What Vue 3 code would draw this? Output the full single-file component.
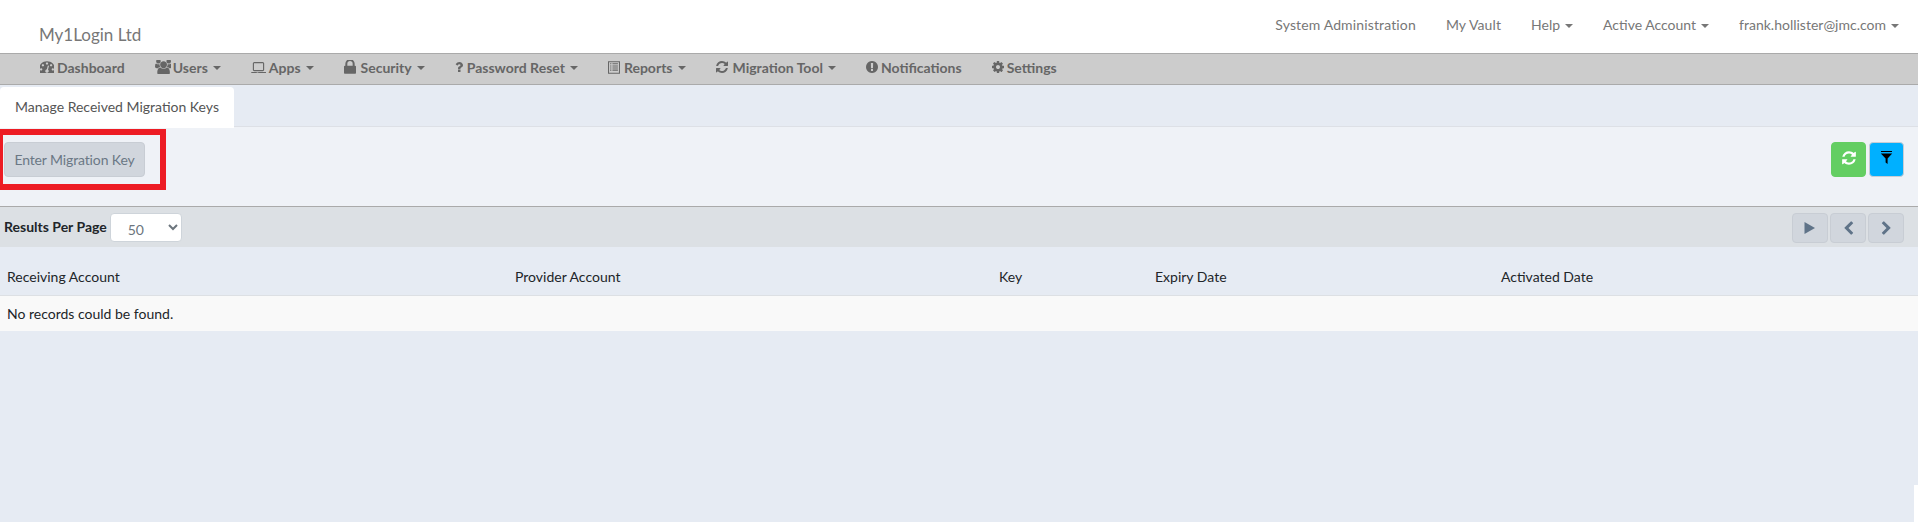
<script setup>
const icons = {
  dashboard: 'M384 1152q0-53-37.5-90.5t-90.5-37.5-90.5 37.5-37.5 90.5 37.5 90.5 90.5 37.5 90.5-37.5 37.5-90.5zm192-448q0-53-37.5-90.5t-90.5-37.5-90.5 37.5-37.5 90.5 37.5 90.5 90.5 37.5 90.5-37.5 37.5-90.5zm428 481l101-382q6-26-7.5-48.5t-38.5-29.5-48 6.5-30 39.5l-101 382q-60 5-107 43.5t-63 98.5q-20 77 20 146t117 89 146-20 89-117q16-60-6-117t-72-91zm660-33q0-53-37.5-90.5t-90.5-37.5-90.5 37.5-37.5 90.5 37.5 90.5 90.5 37.5 90.5-37.5 37.5-90.5zm-640-640q0-53-37.5-90.5t-90.5-37.5-90.5 37.5-37.5 90.5 37.5 90.5 90.5 37.5 90.5-37.5 37.5-90.5zm448 192q0-53-37.5-90.5t-90.5-37.5-90.5 37.5-37.5 90.5 37.5 90.5 90.5 37.5 90.5-37.5 37.5-90.5zm320 448q0 261-141 483-19 29-54 29h-1402q-35 0-54-29-141-221-141-483 0-182 71-348t191-286 286-191 348-71 348 71 286 191 191 286 71 348z',
  users: 'M593 896q-162 5-265 128h-134q-82 0-138-40.5t-56-118.5q0-353 124-353 6 0 43.5 21t97.5 42.5 119 21.5q67 0 133-23-5 37-5 66 0 139 81 256zm1071 637q0 120-73 189.5t-194 69.5h-874q-121 0-194-69.5t-73-189.5q0-53 3.5-103.5t14-109 26.5-108.5 43-97.5 62-81 85.5-53.5 111.5-20q10 0 43 21.5t73 48 107 48 135 21.5 135-21.5 107-48 73-48 43-21.5q61 0 111.5 20t85.5 53.5 62 81 43 97.5 26.5 108.5 14 109 3.5 103.5zm-1024-1277q0 106-75 181t-181 75-181-75-75-181 75-181 181-75 181 75 75 181zm704 384q0 159-112.5 271.5t-271.5 112.5-271.5-112.5-112.5-271.5 112.5-271.5 271.5-112.5 271.5 112.5 112.5 271.5zm576 225q0 78-56 118.5t-138 40.5h-134q-103-123-265-128 81-117 81-256 0-29-5-66 66 23 133 23 59 0 119-21.5t97.5-42.5 43.5-21q124 0 124 353zm-128-609q0 106-75 181t-181 75-181-75-75-181 75-181 181-75 181 75 75 181z',
  laptop: 'M416 1216q-66 0-113-47t-47-113v-704q0-66 47-113t113-47h960q66 0 113 47t47 113v704q0 66-47 113t-113 47h-960zm-32-864v704q0 13 9.5 22.5t22.5 9.5h960q13 0 22.5-9.5t9.5-22.5v-704q0-13-9.5-22.5t-22.5-9.5h-960q-13 0-22.5 9.5t-9.5 22.5zm1200 960h160v96q0 40-47 68t-113 28h-1344q-66 0-113-28t-47-68v-96h1504zm-720 96q16 0 16-16t-16-16h-160q-16 0-16 16t16 16h160z',
  lock: 'M640 768h512v-192q0-106-75-181t-181-75-181 75-75 181v192zm832 96v576q0 40-28 68t-68 28h-960q-40 0-68-28t-28-68v-576q0-40 28-68t68-28h32v-192q0-184 132-316t316-132 316 132 132 316v192h32q40 0 68 28t28 68z',
  question: 'M1088 1256v240q0 16-12 28t-28 12h-240q-16 0-28-12t-12-28v-240q0-16 12-28t28-12h240q16 0 28 12t12 28zm316-600q0 54-15.5 101t-35 76.5-55 59.5-57.5 43.5-61 35.5q-41 23-68.5 65t-27.5 67q0 17-12 32.5t-28 15.5h-240q-15 0-25.5-18.5t-10.5-37.5v-45q0-83 65-156.5t143-108.5q59-27 84-56t25-76q0-42-46.5-74t-107.5-32q-65 0-108 29-35 25-107 115-13 16-31 16-12 0-25-8l-164-125q-13-10-15.5-25t5.5-28q160-266 464-266 80 0 161 31t146 83 106 127.5 41 158.5z',
  list: 'M160 128h1472v1536h-1472zM288 256v1280h1216v-1280zM416 384h160v128h-160zM704 384h672v128h-672zM416 640h160v128h-160zM704 640h672v128h-672zM416 896h160v128h-160zM704 896h672v128h-672zM416 1152h160v128h-160zM704 1152h672v128h-672z',
  refresh: 'M1639 1056q0 5-1 7-64 268-268 434.5t-478 166.5q-146 0-282.5-55t-243.5-157l-129 129q-19 19-45 19t-45-19-19-45v-448q0-26 19-45t45-19h448q26 0 45 19t19 45-19 45l-137 137q71 66 161 102t187 36q134 0 250-65t186-179q11-17 53-117 8-23 30-23h192q13 0 22.5 9.5t9.5 22.5zm25-800v448q0 26-19 45t-45 19h-448q-26 0-45-19t-19-45 19-45l138-138q-148-137-349-137-134 0-250 65t-186 179q-11 17-53 117-8 23-30 23h-199q-13 0-22.5-9.5t-9.5-22.5v-7q65-268 270-434.5t480-166.5q146 0 284 55.5t245 156.5l130-129q19-19 45-19t45 19 19 45z',
  alert: 'M896 128q209 0 385.5 103t279.5 279.5 103 385.5-103 385.5-279.5 279.5-385.5 103-385.5-103-279.5-279.5-103-385.5 103-385.5 279.5-279.5 385.5-103zm128 1247v-190q0-14-9-23.5t-22-9.5h-192q-13 0-23 10t-10 23v190q0 13 10 23t23 10h192q13 0 22-9.5t9-23.5zm-2-344l18-621q0-12-10-18-10-8-24-8h-220q-14 0-24 8-10 6-10 18l17 621q0 10 10 17.5t24 7.5h185q14 0 23.5-7.5t10.5-17.5z',
  cog: 'M1152 896q0-106-75-181t-181-75-181 75-75 181 75 181 181 75 181-75 75-181zm512-109v222q0 12-8 23t-20 13l-185 28q-19 54-39 91 35 50 107 138 10 12 10 25t-9 23q-27 37-99 108t-94 71q-12 0-26-9l-138-108q-44 23-91 38-16 136-29 186-7 28-36 28h-222q-14 0-24.5-8.5t-11.5-21.5l-28-184q-49-16-90-37l-141 107q-10 9-25 9-14 0-25-11-126-114-165-168-7-10-7-23 0-12 8-23 15-21 51-66.5t54-70.5q-27-50-41-99l-183-27q-13-2-21-12.5t-8-23.5v-222q0-12 8-23t19-13l186-28q14-46 39-92-40-57-107-138-10-12-10-24 0-10 9-23 26-36 98.5-107.5t94.5-71.5q13 0 26 10l138 107q44-23 91-38 16-136 29-186 7-28 36-28h222q14 0 24.5 8.5t11.5 21.5l28 184q49 16 90 37l142-107q9-9 24-9 13 0 25 10 129 119 165 170 7 8 7 22 0 12-8 23-15 21-51 66.5t-54 70.5q26 50 41 98l183 28q13 2 21 12.5t8 23.5z',
  prev: 'M1427 301l-531 531 531 531q19 19 19 45t-19 45l-166 166q-19 19-45 19t-45-19l-742-742q-19-19-19-45t19-45l742-742q19-19 45-19t45 19l166 166q19 19 19 45t-19 45z',
  next: 'M1363 877l-742 742q-19 19-45 19t-45-19l-166-166q-19-19-19-45t19-45l531-531-531-531q-19-19-19-45t19-45l166-166q19-19 45-19t45 19l742 742q19 19 19 45t-19 45z',
}
const topLinks = [
  { label: 'System Administration', ls: 0.14 },
  { label: 'My Vault', ls: 0.1 },
  { label: 'Help', caret: true, ls: 0 },
  { label: 'Active Account', caret: true, ls: 0 },
  { label: 'frank.hollister@jmc.com', caret: true, ls: 0 },
]
const navItems = [
  { label: 'Dashboard', icon: 'dashboard', vb: '128 256 1536 1280', w: 14, h: 12, gap: 3 },
  { label: 'Users', icon: 'users', vb: '0 128 1792 1536', w: 16, h: 14, gap: 2, caret: true },
  { label: 'Apps', icon: 'laptop', vb: '48 192 1696 1216', w: 15, h: 11, gap: 3, caret: true },
  { label: 'Security', icon: 'lock', vb: '320 256 1152 1280', w: 12, h: 14, gap: 5, caret: true },
  { label: 'Password Reset', icon: 'question', vb: '388 256 1016 1280', w: 8, h: 10, gap: 4, caret: true },
  { label: 'Reports', icon: 'list', vb: '160 128 1472 1536', w: 12, h: 13, gap: 4, caret: true },
  { label: 'Migration Tool', icon: 'refresh', vb: '128 128 1536 1536', w: 12, h: 12, gap: 5, caret: true },
  { label: 'Notifications', icon: 'alert', vb: '128 128 1536 1536', w: 12, h: 12, gap: 3 },
  { label: 'Settings', icon: 'cog', vb: '128 128 1536 1536', w: 12, h: 12, gap: 3 },
]
const columns = ['Receiving Account', 'Provider Account', 'Key', 'Expiry Date', 'Activated Date']
</script>

<template>
  <div class="page">
    <header class="topbar">
      <a class="brand">My1Login Ltd</a>
      <nav class="toplinks">
        <a v-for="l in topLinks" :key="l.label" class="toplink">
          <span :style="{ letterSpacing: l.ls + 'px' }">{{ l.label }}</span><span v-if="l.caret" class="caret"></span>
        </a>
      </nav>
    </header>

    <nav class="mainnav">
      <a v-for="n in navItems" :key="n.label" class="navitem">
        <svg class="navicon" :style="{ width: n.w + 'px', height: n.h + 'px', marginRight: n.gap + 'px' }" :viewBox="n.vb"><path :d="icons[n.icon]" /></svg>
        <span>{{ n.label }}</span><span v-if="n.caret" class="caret"></span>
      </a>
    </nav>

    <div class="tabs">
      <div class="tab">Manage Received Migration Keys</div>
    </div>

    <section class="toolbar">
      <div class="keywrap">
        <button class="btn keybtn">Enter Migration Key</button>
        <div class="highlight"></div>
      </div>
      <div class="actions">
        <button class="iconbtn green"><svg class="refreshicon" viewBox="0 0 1792 1792"><path :d="icons.refresh" /></svg></button>
        <button class="iconbtn blue"><svg class="funnelicon" viewBox="0 0 13 13"><path d="M1 0h11v1H1zM.8 2.6h11.4L7.6 7.4V13L5.6 11.4V7.4z" /></svg></button>
      </div>
    </section>

    <section class="pagerbar">
      <div class="perpage">
        <label>Results Per Page</label>
        <select class="select"><option>50</option></select>
      </div>
      <div class="pager">
        <button class="pagebtn"><svg class="playicon" viewBox="0 0 12 12"><path d="M.5 0L11 6 .5 12z" /></svg></button>
        <button class="pagebtn"><svg viewBox="0 0 1792 1792"><path :d="icons.prev" /></svg></button>
        <button class="pagebtn"><svg viewBox="0 0 1792 1792"><path :d="icons.next" /></svg></button>
      </div>
    </section>

    <table class="grid">
      <colgroup>
        <col class="c1" /><col class="c2" /><col class="c3" /><col class="c4" /><col />
      </colgroup>
      <thead>
        <tr><th v-for="c in columns" :key="c">{{ c }}</th></tr>
      </thead>
      <tbody>
        <tr><td colspan="5">No records could be found.</td></tr>
      </tbody>
    </table>
    <div class="cornerstrip"></div>
  </div>
</template>

<style>
html, body { margin: 0; padding: 0; background: #e6ebf3; overflow: hidden; }
</style>

<style scoped>
.page {
  position: relative;
  width: 1918px;
  height: 522px;
  overflow: hidden;
  background: #e6ebf3;
  font-family: Lato, "Liberation Sans", sans-serif;
  font-size: 14px;
  color: #212529;
}
.topbar {
  height: 53px;
  background: #fff;
  display: flex;
  justify-content: space-between;
  box-sizing: border-box;
}
.brand {
  font-size: 17px;
  color: #777;
  padding: 24px 0 0 39px;
  line-height: 22px;
}
.toplinks {
  display: flex;
  padding: 16px 19px 0 0;
  gap: 30px;
  color: #777;
  line-height: 18px;
}
.toplink { display: inline-flex; align-items: center; height: 18px; white-space: nowrap; }
.caret {
  display: inline-block;
  margin-left: 5px;
  margin-top: 2px;
  border-top: 4px solid currentColor;
  border-left: 4px solid transparent;
  border-right: 4px solid transparent;
}
.mainnav {
  height: 32px;
  box-sizing: border-box;
  background: #ccc;
  border-top: 1px solid #aaa;
  border-bottom: 1px solid #aaa;
  display: flex;
  gap: 30px;
  padding: 0 0 4px 40px;
  align-items: center;
  color: #666;
  font-weight: 700;
  white-space: nowrap;
}
.navitem { display: inline-flex; align-items: center; }
.navicon { fill: #666; flex: none; }
.tabs {
  height: 42px;
  box-sizing: border-box;
  padding-top: 2px;
  border-bottom: 1px solid #dde0e6;
  display: flex;
}
.tab {
  width: 234px;
  box-sizing: border-box;
  padding-left: 15px;
  line-height: 39px;
  background: #fff;
  border-top-right-radius: 4px;
  border-top-left-radius: 4px;
  color: #555;
  height: 41px;
}
.toolbar {
  height: 79px;
  box-sizing: border-box;
  background: #eff2f7;
  display: flex;
  justify-content: space-between;
  padding: 15px 14px 0 4px;
}
.keywrap { position: relative; }
.btn {
  font: inherit;
  cursor: pointer;
}
.keybtn {
  width: 141px;
  height: 35px;
  padding: 0;
  background: #d1d6dd;
  border: 1px solid #c8cdd4;
  border-radius: 4px;
  color: #6b7885;
  letter-spacing: -0.13px;
}
.highlight {
  position: absolute;
  left: -7px;
  top: -13px;
  width: 169px;
  height: 61px;
  box-sizing: border-box;
  border: 6px solid #ed1c24;
  pointer-events: none;
}
.actions { display: flex; gap: 3px; }
.iconbtn {
  width: 35px;
  height: 35px;
  padding: 0;
  border-radius: 4px;
  display: flex;
  align-items: center;
  justify-content: center;
  border: 1px solid transparent;
}
.refreshicon { width: 16px; height: 16px; margin-top: -3px; }
.funnelicon { width: 13px; height: 13px; margin-top: -4px; }
.green { background: #63ce62; border-color: #63ce62; fill: #fff; }
.blue { background: #00b0ff; border-color: #c8cdd4; fill: #000; }
.pagerbar {
  height: 41px;
  box-sizing: border-box;
  background: #dce0e4;
  border-top: 1px solid #aaa;
  display: flex;
  justify-content: space-between;
  padding: 6px 14px 0 4px;
}
.perpage { display: flex; align-items: flex-start; gap: 3px; }
.perpage label { font-weight: 700; color: #212529; line-height: 28px; }
.select {
  width: 72px;
  height: 29px;
  box-sizing: border-box;
  background: #fff;
  border: 1px solid #ced4da;
  border-radius: 4px;
  padding: 3px 12px 0 13px;
  font: inherit;
  color: #6c757d;
}
.pager { display: flex; gap: 2px; }
.pagebtn {
  width: 36px;
  height: 30px;
  padding: 0;
  background: #d1d6dd;
  border: 1px solid #c8cdd4;
  border-radius: 4px;
  display: flex;
  align-items: center;
  justify-content: center;
  fill: #5f7388;
}
.pagebtn svg { width: 15px; height: 15px; }
.pagebtn .playicon { width: 12px; height: 12px; }
.grid {
  width: 100%;
  border-collapse: collapse;
  table-layout: fixed;
  color: #212529;
}
.c1 { width: 508px; }
.c2 { width: 484px; }
.c3 { width: 156px; }
.c4 { width: 346px; }
th {
  font-weight: 400;
  text-align: left;
  padding: 11px 7px 0;
  height: 48px;
  box-sizing: border-box;
  border-bottom: 1px solid #dde0e4;
}
td {
  background: #f9f9f9;
  padding: 0 7px;
  height: 36px;
  box-sizing: border-box;
}
.cornerstrip {
  position: absolute;
  right: 0;
  bottom: 0;
  width: 4px;
  height: 37px;
  background: #fff;
}
</style>
